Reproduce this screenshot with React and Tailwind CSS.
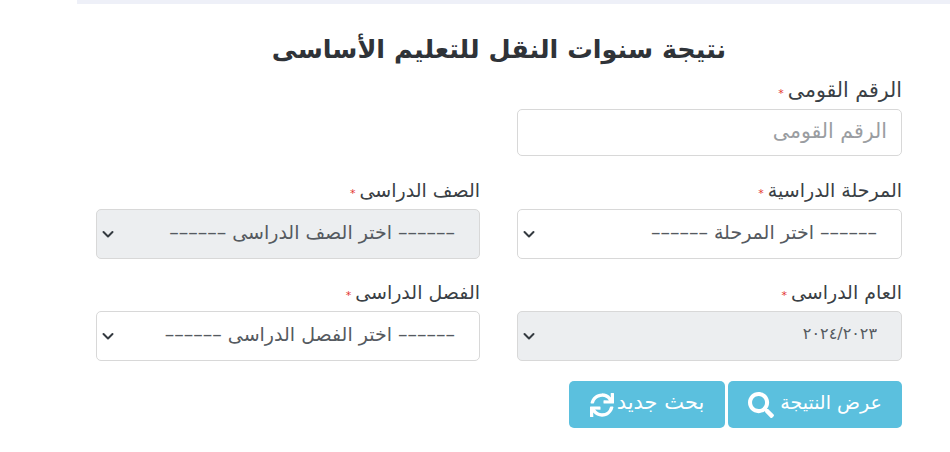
import React from "react";
import { FaSearch, FaSync } from "react-icons/fa";

const font = "[font-family:'DejaVu_Sans','Noto_Sans',sans-serif]";

function Chevron() {
  return (
    <svg viewBox="0 0 16 16" className="pointer-events-none absolute left-[4px] top-1/2 h-[16px] w-[16px] -translate-y-1/2" fill="none" stroke="#343a40" strokeWidth="2" strokeLinecap="round" strokeLinejoin="round">
      <path d="M3.5 6l4.5 4.5L12.5 6" />
    </svg>
  );
}

function Label({ children, large }) {
  return (
    <label className={`mb-[7px] flex h-[24px] items-center gap-[4px] leading-[24px] text-[#3a3f45] ${large ? "text-[20.5px]" : "text-[19px]"}`}>
      <span>{children}</span>
      <span className="mt-[6px] text-[11px] leading-none text-[#e3342f]">*</span>
    </label>
  );
}

function SelectField({ label, value, disabled, small }) {
  return (
    <div className="flex min-w-0 flex-col">
      <Label>{label}</Label>
      <div className="relative">
        <select
          dir="rtl"
          disabled={disabled}
          defaultValue={value}
          className={`h-[50px] w-full appearance-none rounded-[5px] border border-[#d8d8d8] pb-[4px] pl-[30px] pr-[24px] text-[#555a60] opacity-100 ${small ? "text-[16px]" : "text-[19px]"} ${disabled ? "bg-[#eceef0]" : "bg-white"} ${font}`}
        >
          <option value={value}>{value}</option>
        </select>
        <Chevron />
      </div>
    </div>
  );
}

export default function App() {
  return (
    <div dir="rtl" className={`h-[452px] w-[950px] overflow-hidden bg-white ${font}`}>
      <div className="ml-[77px] h-[4px] bg-[#eef0f8]" />
      <div className="mr-[48px] w-[806px]">
        <h1 className="mt-[28px] h-[34px] text-center text-[25.5px] font-bold leading-[34px] text-[#2f3338]">
          نتيجة سنوات النقل للتعليم الأساسى
        </h1>
        <div className="mt-[12px] grid grid-cols-[385px_384px] gap-x-[37px]">
          <div className="flex flex-col">
            <Label large>الرقم القومى</Label>
            <input
              placeholder="الرقم القومى"
              className="h-[47px] w-full rounded-[5px] border border-[#d8d8d8] bg-white px-[14px] pb-[4px] text-[20.5px] outline-none placeholder:text-[#9a9da1]"
            />
          </div>
        </div>
        <div className="mt-[22px] grid grid-cols-[385px_384px] gap-x-[37px] gap-y-[21px]">
          <SelectField label="المرحلة الدراسية" value="–––––– اختر المرحلة ––––––" />
          <SelectField label="الصف الدراسى" value="–––––– اختر الصف الدراسى ––––––" disabled />
          <SelectField label="العام الدراسى" value="٢٠٢٤/٢٠٢٣" disabled small />
          <SelectField label="الفصل الدراسى" value="–––––– اختر الفصل الدراسى ––––––" />
        </div>
        <div className="mt-[20px] flex gap-[3px]">
          <button className="flex h-[47px] w-[174px] items-center justify-center gap-[6px] rounded-[5px] bg-[#5bc0de] text-[19px] text-white">
            <span className="pb-[4px]">عرض النتيجة</span>
            <FaSearch className="h-[26px] w-[26px]" />
          </button>
          <button className="flex h-[47px] w-[156px] items-center justify-center gap-[3px] rounded-[5px] bg-[#5bc0de] text-[21px] text-white">
            <span className="pb-[4px]">بحث جديد</span>
            <FaSync className="h-[24px] w-[24px]" />
          </button>
        </div>
      </div>
    </div>
  );
}
